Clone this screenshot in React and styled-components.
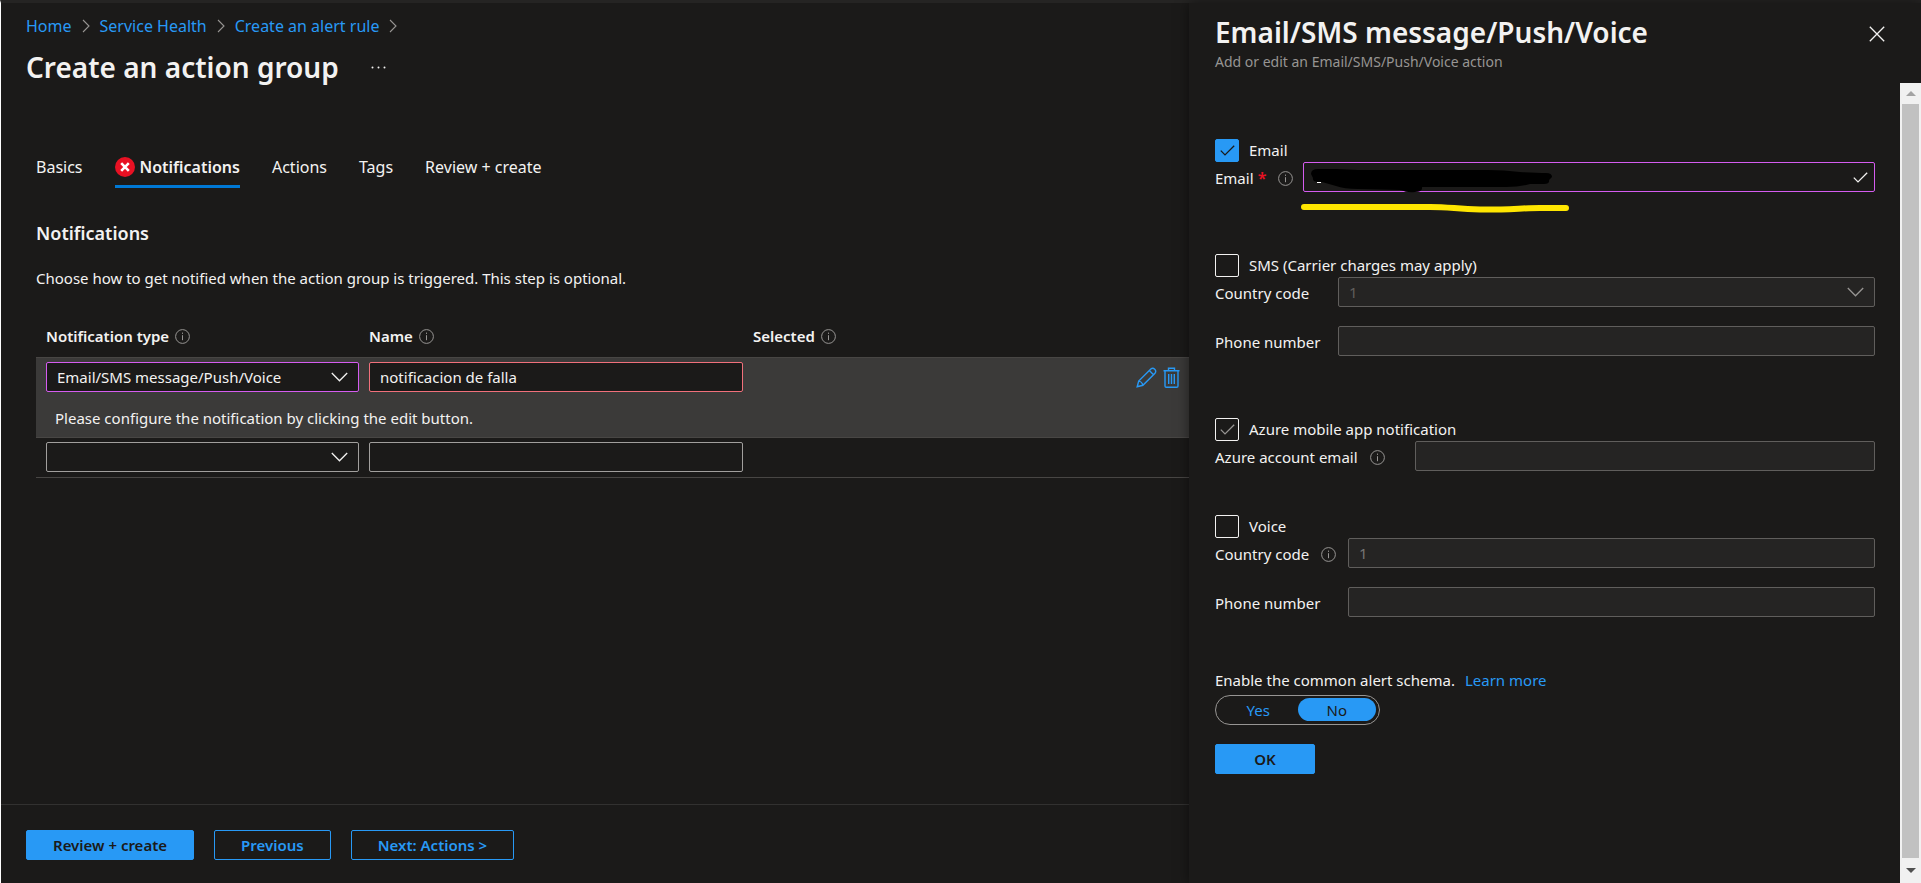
import React, { useState } from "react";
import styled, { createGlobalStyle, css } from "styled-components";

const color = {
  bg: "#1b1a19",
  strip: "#252423",
  row: "#3b3a39",
  line: "#484644",
  text: "#f3f2f1",
  muted: "#979593",
  link: "#2899f5",
  accent: "#2899f5",
  edited: "#d55cf0",
  invalid: "#f1707b",
  border: "#a19f9d",
  borderOff: "#605e5c",
};

const GlobalStyle = createGlobalStyle`
  *, *::before, *::after { box-sizing: border-box; }
  body {
    margin: 0;
    background: ${color.bg};
    color: ${color.text};
    font: 15px/20px "Noto Sans", "Open Sans", sans-serif;
  }
  button, input, select { font: inherit; color: inherit; }
`;

const Shell = styled.div`
  min-height: 100vh;
  display: flex;
  border-top: 3px solid ${color.strip};
  border-left: 1px solid #fff;
`;

const Main = styled.main`
  flex: 1;
  min-width: 0;
  display: flex;
  flex-direction: column;
`;

const Breadcrumb = styled.nav`
  display: flex;
  align-items: center;
  gap: 10px;
  padding: 13px 25px 0;
  font-size: 16px;
  a { color: ${color.link}; text-decoration: none; }
`;

const TitleRow = styled.header`
  display: flex;
  align-items: center;
  gap: 32px;
  padding: 11px 25px 0;
`;

const Title = styled.h1`
  margin: 0;
  font-size: 28px;
  line-height: 40px;
  font-weight: 600;
`;

const IconButton = styled.button`
  display: flex;
  padding: 0;
  border: 0;
  background: none;
  color: ${(p) => p.$tone || color.text};
  cursor: pointer;
`;

const Tabs = styled.nav`
  display: flex;
  gap: 32px;
  padding: 62px 35px 0;
  font-size: 16px;
`;

const Tab = styled.a`
  display: flex;
  align-items: center;
  gap: 5px;
  height: 39px;
  color: ${color.text};
  text-decoration: none;
  border-bottom: 3px solid ${(p) => (p.$active ? "#0078d4" : "transparent")};
  font-weight: ${(p) => (p.$active ? 600 : 400)};
`;

const Section = styled.section`
  flex: 1;
  padding: 31px 0 0 35px;
`;

const SectionTitle = styled.h2`
  margin: 0;
  font-size: 18px;
  line-height: 28px;
  font-weight: 600;
`;

const Lead = styled.p`
  margin: 21px 0 0;
`;

const Table = styled.table`
  width: 100%;
  margin-top: 37px;
  table-layout: fixed;
  border-collapse: separate;
  border-spacing: 0;

  th {
    height: 32px;
    padding: 0 5px 10px;
    text-align: left;
    font-weight: 600;
  }
  td {
    padding: 4px 5px 5px;
    vertical-align: top;
  }
  th:first-child, td:first-child { padding-left: 10px; }
`;

const Row = styled.tr`
  td {
    border-top: ${(p) => (p.$note ? 0 : 1)}px solid ${color.line};
    background: ${(p) => (p.$selected ? color.row : "transparent")};
  }
  &:last-child td { border-bottom: 1px solid ${color.line}; }
`;

const NoteCell = styled.td`
  &&& { height: 40px; padding: 11px 19px 0; }
`;

const HeadLabel = styled.span`
  display: flex;
  align-items: center;
  gap: 6px;
`;

const RowActions = styled.div`
  display: flex;
  justify-content: flex-end;
  gap: 6px;
  padding: 5px 4px 0 0;
`;

const fieldLook = css`
  display: block;
  width: 100%;
  height: 30px;
  padding: 0 10px;
  border: 1px solid ${(p) => p.$line || color.border};
  border-radius: 2px;
  background: ${color.bg};
  outline: 0;
  &:disabled {
    opacity: 1;
    color: ${color.borderOff};
    background: #252423;
    border-color: ${color.borderOff};
  }
`;

const TextField = styled.input`
  ${fieldLook}
`;

const SelectField = styled.select`
  ${fieldLook}
  appearance: none;
`;

const Overlay = styled.div`
  position: relative;
  flex: 1;
  min-width: 0;
`;

const FieldMark = styled.span`
  position: absolute;
  top: 0;
  bottom: 0;
  right: ${(p) => p.$right}px;
  display: flex;
  align-items: center;
  color: ${(p) => p.$tone || color.text};
  pointer-events: none;
`;

const Footer = styled.footer`
  display: flex;
  gap: 20px;
  padding: 25px 25px 23px;
  border-top: 1px solid #323130;
`;

const Button = styled.button`
  height: 30px;
  min-width: 100px;
  padding: 0 26px;
  border: 1px solid ${color.accent};
  border-radius: 2px;
  background: ${(p) => (p.$primary ? color.accent : "transparent")};
  color: ${(p) => (p.$primary ? color.bg : color.link)};
  font-weight: 600;
  line-height: 20px;
  cursor: pointer;
`;

const Panel = styled.aside`
  flex: none;
  width: 732px;
  display: flex;
  flex-direction: column;
  background: ${color.bg};
  box-shadow: 0 0 12px rgba(0, 0, 0, 0.5);
`;

const PanelHead = styled.header`
  display: flex;
  justify-content: space-between;
  align-items: flex-start;
  height: 80px;
  padding: 9px 36px 0 26px;
  p { margin: 0; color: ${color.muted}; font-size: 14px; }
  button { margin-top: 14px; }
`;

const PanelBody = styled.div`
  flex: 1;
  display: flex;
`;

const Form = styled.form`
  flex: 1;
  min-width: 0;
  display: flex;
  flex-direction: column;
  padding: 56px 25px 20px 26px;
`;

const Group = styled.fieldset`
  margin: 0 0 ${(p) => p.$after}px;
  padding: 0;
  border: 0;
  min-width: 0;
`;

const Choice = styled.label`
  display: flex;
  gap: 10px;
  height: 23px;
  line-height: 22px;
`;

const TickBox = styled.span`
  position: relative;
  display: flex;
  width: 24px;
  height: 23px;
  input {
    appearance: none;
    width: 100%;
    height: 100%;
    margin: 0;
    border: 1px solid ${color.text};
    border-radius: 2px;
  }
  input:checked:not(:disabled) {
    background: ${color.accent};
    border-color: ${color.accent};
  }
  svg {
    position: absolute;
    inset: 0;
    margin: auto;
    color: ${(p) => (p.$off ? color.muted : color.bg)};
    pointer-events: none;
  }
`;

const FormRow = styled.div`
  display: flex;
  align-items: center;
  & + & { margin-top: 19px; }
`;

const FormLabel = styled.div`
  flex: none;
  display: flex;
  align-items: center;
  gap: 12px;
  width: ${(p) => p.$width}px;
  padding-top: 2px;
`;

const Star = styled.span`
  color: #e81123;
  font-size: 16px;
  font-weight: 600;
`;

const SchemaLine = styled.p`
  display: flex;
  gap: 10px;
  margin: 0;
  a { color: ${color.link}; text-decoration: none; }
`;

const Switch = styled.div`
  display: flex;
  width: 165px;
  height: 30px;
  margin: 5px 0 19px;
  padding: 2px 3px 3px;
  border: 1px solid ${color.muted};
  border-radius: 15px;
`;

const SwitchOption = styled.label`
  flex: 1;
  display: flex;
  justify-content: center;
  align-items: center;
  border-radius: 12px;
  cursor: pointer;
  color: ${(p) => (p.$on ? color.bg : color.link)};
  background: ${(p) => (p.$on ? color.accent : "transparent")};
  input { position: absolute; opacity: 0; pointer-events: none; }
`;

const ScrollTrack = styled.div`
  flex: none;
  width: 21px;
  display: flex;
  flex-direction: column;
  background: #f1f1f1;
`;

const ScrollArrow = styled.span`
  display: flex;
  align-items: center;
  justify-content: center;
  height: ${(p) => p.$size}px;
`;

const ScrollThumb = styled.span`
  flex: 1;
  margin: 0 2px;
  background: #c1c1c1;
`;

const Ink = styled.svg`
  position: absolute;
  left: -5px;
  top: 6px;
  overflow: visible;
  pointer-events: none;
`;

const Chevron = () => (
  <svg width="17" height="10" viewBox="0 0 17 10" fill="none" stroke="currentColor" strokeWidth="1.3">
    <path d="M.8 1l7.7 7.8L16.200 1" />
  </svg>
);

const CrumbArrow = () => (
  <svg width="8" height="14" viewBox="0 0 8 14" fill="none" stroke={color.muted} strokeWidth="1.1">
    <path d="M1 1l6 6-6 6" />
  </svg>
);

const Info = () => (
  <svg width="15" height="15" viewBox="0 0 15 15" fill="none" stroke={color.muted}>
    <circle cx="7.5" cy="7.5" r="6.9" />
    <path d="M7.500 6.200v5M7.500 3.600v1.300" />
  </svg>
);

const ErrorDot = () => (
  <svg width="20" height="20" viewBox="0 0 20 20">
    <circle cx="10" cy="10" r="10" fill="#e81123" />
    <path d="M6.200 6.200l7.600 7.600M13.800 6.200l-7.600 7.600" stroke="#fff" strokeWidth="2.600" />
  </svg>
);

const Tick = () => (
  <svg width="15" height="11" viewBox="0 0 15 11" fill="none" stroke="currentColor" strokeWidth="1.3">
    <path d="M.8 5.600l4.200 4.300L14.200.7" />
  </svg>
);

const Pencil = () => (
  <svg width="21" height="21" viewBox="0 0 21 21" fill="none" stroke="currentColor" strokeWidth="1.4">
    <path d="M1.200 19.800l1.500-5.700L14.800 2a3 3 0 0 1 4.200 4.200L6.900 18.300zM2.700 14.100c1.700.2 3.800 2.200 4.200 4.200M13.300 3.500l4.200 4.200" />
  </svg>
);

const Trash = () => (
  <svg width="17" height="21" viewBox="0 0 17 21" fill="none" stroke="currentColor" strokeWidth="1.4">
    <path d="M.5 3.700h16M5.500 3.500V1.200h6v2.300M2 3.700v15.200q0 1.300 1.300 1.300h10.400q1.300 0 1.300-1.300V3.700M5.700 7v10M8.500 7v10M11.300 7v10" />
  </svg>
);

const Close = () => (
  <svg width="16" height="16" viewBox="0 0 16 16" fill="none" stroke="currentColor" strokeWidth="1.3">
    <path d="M.8.8l14.400 14.400M15.200.8L.8 15.200" />
  </svg>
);

const Dots = () => (
  <svg width="15" height="3" viewBox="0 0 15 3" fill="currentColor">
    <circle cx="1.500" cy="1.500" r="1" />
    <circle cx="7.500" cy="1.500" r="1" />
    <circle cx="13.500" cy="1.500" r="1" />
  </svg>
);

const Redaction = () => (
  <Ink width="273" height="46" viewBox="0 0 273 46" aria-hidden="true">
    <path
      d="M13 6Q13 1 20 1L38 1L60 2L190 2Q206 2 222 4Q238 5 248 5Q254 5 254 9L251 12Q252 16 246 16L232 16Q222 19 208 19L124 19Q125 24 117 24Q109 25 103 22L60 21Q46 21 38 18L24 14Q14 15 15 10Z"
      fill="#000"
    />
    <path d="M19 14.500h4" stroke="#fff" />
    <path
      d="M6 39h126c20 0 26 2 50 2.500s44-1.500 60-1.500h26"
      fill="none"
      stroke="#ffe600"
      strokeWidth="6"
      strokeLinecap="round"
    />
  </Ink>
);

const crumbs = ["Home", "Service Health", "Create an alert rule"];
const tabs = ["Basics", "Notifications", "Actions", "Tags", "Review + create"];

const Check = ({ label, checked, disabled, onChange }) => (
  <Choice>
    <TickBox $off={disabled}>
      <input type="checkbox" checked={checked} disabled={disabled} onChange={onChange} />
      {checked && <Tick />}
    </TickBox>
    {label}
  </Choice>
);

const TypeSelect = ({ options, line, label }) => (
  <Overlay>
    <SelectField aria-label={label} $line={line}>
      {options.map((o) => <option key={o}>{o}</option>)}
    </SelectField>
    <FieldMark $right={11}><Chevron /></FieldMark>
  </Overlay>
);

const LabeledRow = ({ id, label, width, info, star, children }) => (
  <FormRow>
    <FormLabel $width={width}>
      <label htmlFor={id}>{label}{star && <Star> *</Star>}</label>
      {info && <Info />}
    </FormLabel>
    <Overlay>{children}</Overlay>
  </FormRow>
);

export default function App() {
  const [name, setName] = useState("notificacion de falla");
  const [on, setOn] = useState({ email: true, sms: false, voice: false });
  const [schema, setSchema] = useState("No");
  const toggle = (key) => () => setOn({ ...on, [key]: !on[key] });

  return (
    <>
      <GlobalStyle />
      <Shell>
        <Main>
          <Breadcrumb aria-label="Breadcrumb">
            {crumbs.map((c) => (
              <React.Fragment key={c}>
                <a href="#">{c}</a>
                <CrumbArrow />
              </React.Fragment>
            ))}
          </Breadcrumb>
          <TitleRow>
            <Title>Create an action group</Title>
            <IconButton aria-label="More"><Dots /></IconButton>
          </TitleRow>
          <Tabs>
            {tabs.map((t) => (
              <Tab key={t} href="#" $active={t === "Notifications"}>
                {t === "Notifications" && <ErrorDot />}
                {t}
              </Tab>
            ))}
          </Tabs>
          <Section>
            <SectionTitle>Notifications</SectionTitle>
            <Lead>Choose how to get notified when the action group is triggered. This step is optional.</Lead>
            <Table>
              <colgroup>
                <col width="328" />
                <col width="384" />
                <col />
                <col width="70" />
              </colgroup>
              <thead>
                <tr>
                  <th><HeadLabel>Notification type <Info /></HeadLabel></th>
                  <th><HeadLabel>Name <Info /></HeadLabel></th>
                  <th colSpan="2"><HeadLabel>Selected <Info /></HeadLabel></th>
                </tr>
              </thead>
              <tbody>
                <Row $selected>
                  <td><TypeSelect label="Notification type" options={["Email/SMS message/Push/Voice"]} line={color.edited} /></td>
                  <td>
                    <TextField aria-label="Name" value={name} onChange={(e) => setName(e.target.value)} $line={color.invalid} />
                  </td>
                  <td />
                  <td>
                    <RowActions>
                      <IconButton $tone={color.link} aria-label="Edit"><Pencil /></IconButton>
                      <IconButton $tone={color.link} aria-label="Delete"><Trash /></IconButton>
                    </RowActions>
                  </td>
                </Row>
                <Row $selected $note>
                  <NoteCell colSpan="4">Please configure the notification by clicking the edit button.</NoteCell>
                </Row>
                <Row>
                  <td><TypeSelect label="New notification type" options={[""]} /></td>
                  <td><TextField aria-label="New name" /></td>
                  <td />
                  <td />
                </Row>
              </tbody>
            </Table>
          </Section>
          <Footer>
            <Button $primary>Review + create</Button>
            <Button>Previous</Button>
            <Button>Next: Actions &gt;</Button>
          </Footer>
        </Main>

        <Panel>
          <PanelHead>
            <div>
              <Title as="h2">Email/SMS message/Push/Voice</Title>
              <p>Add or edit an Email/SMS/Push/Voice action</p>
            </div>
            <IconButton aria-label="Close"><Close /></IconButton>
          </PanelHead>
          <PanelBody>
            <Form onSubmit={(e) => e.preventDefault()}>
              <Group $after={62}>
                <Check label="Email" checked={on.email} onChange={toggle("email")} />
                <LabeledRow id="email" label="Email" width={88} star info>
                  <TextField id="email" type="email" $line={color.edited} />
                  <FieldMark $right={7}><Tick /></FieldMark>
                  <Redaction />
                </LabeledRow>
              </Group>
              <Group $after={62}>
                <Check label="SMS (Carrier charges may apply)" checked={on.sms} onChange={toggle("sms")} />
                <LabeledRow id="sms-code" label="Country code" width={123}>
                  <SelectField id="sms-code" disabled><option>1</option></SelectField>
                  <FieldMark $right={11} $tone={color.muted}><Chevron /></FieldMark>
                </LabeledRow>
                <LabeledRow id="sms-phone" label="Phone number" width={123}>
                  <TextField id="sms-phone" disabled />
                </LabeledRow>
              </Group>
              <Group $after={44}>
                <Check label="Azure mobile app notification" checked disabled />
                <LabeledRow id="azure-email" label="Azure account email" width={200} info>
                  <TextField id="azure-email" disabled />
                </LabeledRow>
              </Group>
              <Group $after={53}>
                <Check label="Voice" checked={on.voice} onChange={toggle("voice")} />
                <LabeledRow id="voice-code" label="Country code" width={133} info>
                  <TextField id="voice-code" placeholder="1" disabled />
                </LabeledRow>
                <LabeledRow id="voice-phone" label="Phone number" width={133}>
                  <TextField id="voice-phone" disabled />
                </LabeledRow>
              </Group>
              <SchemaLine>
                Enable the common alert schema. <a href="#">Learn more</a>
              </SchemaLine>
              <Switch role="radiogroup" aria-label="Enable the common alert schema">
                {["Yes", "No"].map((v) => (
                  <SwitchOption key={v} $on={schema === v}>
                    <input type="radio" name="schema" checked={schema === v} onChange={() => setSchema(v)} />
                    {v}
                  </SwitchOption>
                ))}
              </Switch>
              <div><Button $primary type="submit">OK</Button></div>
            </Form>
            <ScrollTrack aria-hidden="true">
              <ScrollArrow $size={21}>
                <svg width="10" height="5" viewBox="0 0 10 5"><path d="M0 5l5-5 5 5z" fill="#a3a3a3" /></svg>
              </ScrollArrow>
              <ScrollThumb />
              <ScrollArrow $size={25}>
                <svg width="10" height="5" viewBox="0 0 10 5"><path d="M0 0l5 5 5-5z" fill="#505050" /></svg>
              </ScrollArrow>
            </ScrollTrack>
          </PanelBody>
        </Panel>
      </Shell>
    </>
  );
}
